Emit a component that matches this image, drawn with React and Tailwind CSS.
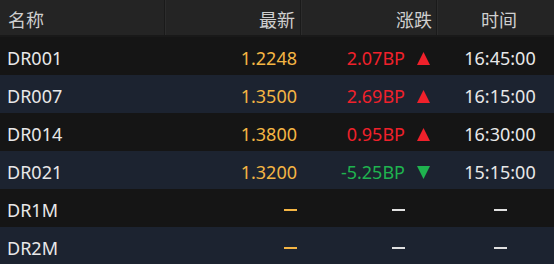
import React from "react";

const rows = [
  { name: "DR001", price: "1.2248", chg: "2.07BP", dir: "up", time: "16:45:00" },
  { name: "DR007", price: "1.3500", chg: "2.69BP", dir: "up", time: "16:15:00" },
  { name: "DR014", price: "1.3800", chg: "0.95BP", dir: "up", time: "16:30:00" },
  { name: "DR021", price: "1.3200", chg: "-5.25BP", dir: "down", time: "15:15:00" },
  { name: "DR1M", price: null },
  { name: "DR2M", price: null },
];

const font = { fontFamily: '"Noto Sans", "Noto Sans CJK SC", sans-serif' };

function Dash({ color }) {
  return <span className={`inline-block w-[13px] h-[2px] ${color}`} />;
}

export default function App() {
  return (
    <div className="w-[554px] h-[264px] overflow-hidden bg-[#151515] text-[18px] leading-none" style={font}>
      <div className="grid grid-cols-[165px_136px_136px_117px] h-[37px] bg-[#242424] border-b-2 border-[#191919] text-[#cfcfcf]">
        <div className="flex items-center pt-[4px] pl-[8px] border-r border-[#1a1a1a]">名称</div>
        <div className="flex items-center justify-end pt-[4px] pr-[5px] border-l border-r border-l-[#2c2c2c] border-r-[#1a1a1a]">最新</div>
        <div className="flex items-center justify-end pt-[4px] pr-[4px] border-l border-r border-l-[#2c2c2c] border-r-[#1a1a1a]">涨跌</div>
        <div className="flex items-center justify-center pt-[4px] pl-[6px] border-l border-[#2c2c2c]">时间</div>
      </div>
      {rows.map((r, i) => (
        <div
          key={r.name}
          className={`grid grid-cols-[165px_136px_136px_117px] h-[38px] pt-[4px] items-center ${i % 2 === 0 ? "bg-[#151515]" : "bg-[#1c2330]"}`}
        >
          <div className="pl-[7px] text-[#e8e8e8]">{r.name}</div>
          <div className="flex justify-end pr-[4px] text-[#f4b544]">
            {r.price ? r.price : <Dash color="bg-[#f4b544]" />}
          </div>
          <div className="flex items-center justify-end pr-[7px]">
            {r.price ? (
              <span className={r.dir === "up" ? "text-[#f0212b]" : "text-[#1fb34f]"}>{r.chg}</span>
            ) : (
              <Dash color="bg-[#e0e0e0]" />
            )}
            <span className="w-[25px] flex justify-end">
              {r.price && r.dir === "up" && (
                <svg width="13" height="13" viewBox="0 0 13 13"><polygon points="6.5,0 13,13 0,13" fill="#f0212b" /></svg>
              )}
              {r.price && r.dir === "down" && (
                <svg width="13" height="13" viewBox="0 0 13 13"><polygon points="0,0 13,0 6.5,13" fill="#1fb34f" /></svg>
              )}
            </span>
          </div>
          <div className="flex justify-center pl-[9px] text-[#e8e8e8]">
            {r.price ? r.time : <Dash color="bg-[#e0e0e0]" />}
          </div>
        </div>
      ))}
    </div>
  );
}
